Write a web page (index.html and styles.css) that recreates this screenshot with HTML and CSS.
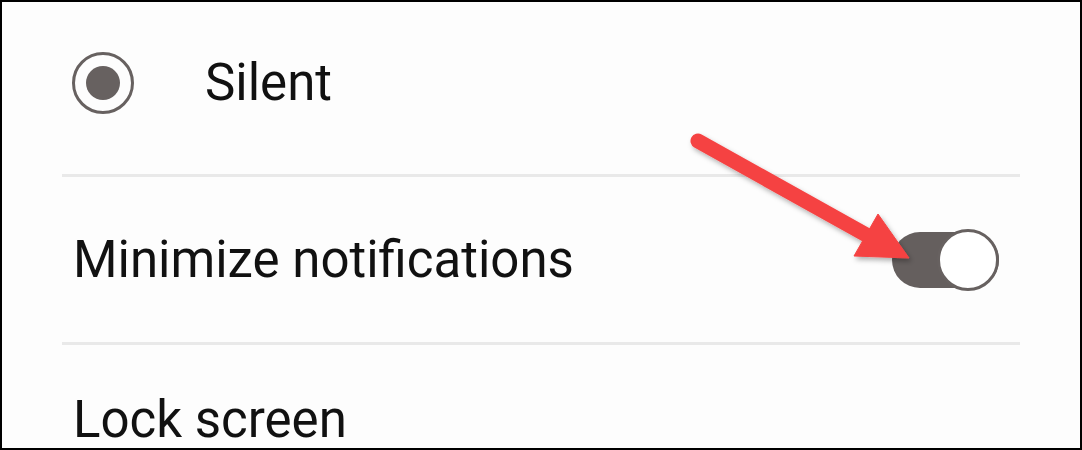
FILE: index.html
```html
<!DOCTYPE html>
<html lang="en">
  <head>
    <meta charset="UTF-8" />
    <meta name="viewport" content="width=device-width, initial-scale=1.0" />
    <title>Notification settings</title>
    <link rel="stylesheet" href="styles.css">
  </head>
  <body>
    <div class="screen">
      <div class="list">
        <label class="row row-radio">
          <span class="radio"><span class="radio-dot"></span></span>
          <span class="title">Silent</span>
        </label>
        <div class="divider"></div>
        <div class="row row-switch">
          <span class="title">Minimize notifications</span>
          <span class="switch"><span class="switch-thumb"></span></span>
        </div>
        <div class="divider"></div>
        <div class="row row-last">
          <span class="title">Lock screen</span>
        </div>
      </div>

      <!-- annotation arrow pointing at the toggle -->
      <svg class="arrow" width="1082" height="450" viewBox="0 0 1082 450">
        <defs>
          <filter id="shadow" x="-20%" y="-20%" width="140%" height="140%">
            <feDropShadow dx="2" dy="3" stdDeviation="2.5" flood-color="#000" flood-opacity="0.3" />
          </filter>
        </defs>
        <g filter="url(#shadow)" fill="#f54343" stroke="#f54343">
          <line x1="698" y1="141" x2="870" y2="237" stroke-width="15" stroke-linecap="round" />
          <polygon points="878,214 854,256 909,258" stroke-width="1" stroke-linejoin="round" />
        </g>
      </svg>
    </div>
  </body>
</html>
```

FILE: styles.css
```css
body {
  margin: 0;
  font-family: Roboto, "Liberation Sans", sans-serif;
}

.screen {
  position: relative;
  box-sizing: border-box;
  width: 1082px;
  height: 450px;
  border: 2px solid #000;
  background-color: #fdfdfd;
  overflow: hidden;
}

.list {
  margin: 0 60px;
}

.row {
  display: flex;
  align-items: center;
  padding: 0 11px;
}

.title {
  font-size: 51px;
  line-height: 60px;
  color: #111;
}

.row-radio {
  height: 162px;
  padding-left: 10px;
  padding-bottom: 10px;
  gap: 71px;
}

.radio {
  box-sizing: border-box;
  width: 62px;
  height: 62px;
  border: 3.5px solid #676160;
  border-radius: 50%;
  display: flex;
  align-items: center;
  justify-content: center;
}

.radio-dot {
  width: 34px;
  height: 34px;
  border-radius: 50%;
  background-color: #676160;
}

.divider {
  height: 3px;
  background-color: #e9e9e9;
}

.row-switch {
  height: 165px;
  justify-content: space-between;
  padding-right: 21px;
}

.switch {
  display: flex;
  align-items: center;
  width: 107px;
  height: 56px;
  border-radius: 28px;
  background-color: #655f5e;
  justify-content: flex-end;
}

.switch-thumb {
  box-sizing: border-box;
  width: 62px;
  height: 62px;
  border: 3px solid #676160;
  border-radius: 50%;
  background-color: #fff;
}

.row-last {
  padding-top: 45px;
}

.arrow {
  position: absolute;
  left: -2px;
  top: -2px;
  pointer-events: none;
}
```
